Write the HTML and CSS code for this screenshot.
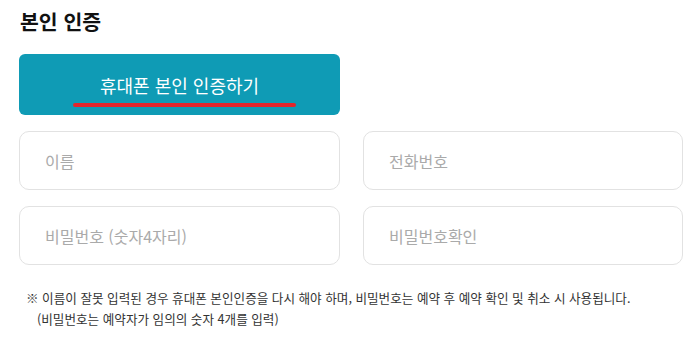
FILE: index.html
```html
<!DOCTYPE html>
<html lang="ko">
<head>
  <meta charset="UTF-8">
  <title>본인 인증</title>
  <link rel="stylesheet" href="styles.css">
</head>
<body>
  <div class="auth-section">
    <h2 class="auth-title">본인 인증</h2>
    <div class="auth-grid">
      <button type="button" class="btn-phone"><span class="btn-label">휴대폰 본인 인증하기</span></button>
      <div></div>
      <input type="text" class="field" placeholder="이름">
      <input type="text" class="field" placeholder="전화번호">
      <input type="password" class="field" placeholder="비밀번호 (숫자4자리)">
      <input type="password" class="field" placeholder="비밀번호확인">
    </div>
    <p class="auth-note">※ 이름이 잘못 입력된 경우 휴대폰 본인인증을 다시 해야 하며, 비밀번호는 예약 후 예약 확인 및 취소 시 사용됩니다.<br>
      <span class="note-sub">(비밀번호는 예약자가 임의의 숫자 4개를 입력)</span></p>
  </div>
</body>
</html>
```

FILE: styles.css
```css
body { background: #fff; font-family: "Noto Sans CJK KR", "Noto Sans", sans-serif; margin: 0; }
.auth-section {
  width: 664px;
  padding: 6px 0 0 19px;
}
.auth-title {
  margin: 0 0 18px 1px;
  font-size: 20.5px;
  font-weight: 700;
  color: #111;
  line-height: 30px;
}
.auth-grid {
  display: grid;
  grid-template-columns: 321px 320px;
  column-gap: 23px;
  row-gap: 16px;
}
.btn-phone {
  height: 61px;
  border: none;
  border-radius: 6px;
  background: #0f9bb5;
  color: #fff;
  font-family: inherit;
  font-size: 18px;
  cursor: pointer;
  display: flex;
  align-items: center;
  justify-content: center;
  padding: 0;
}
.btn-label {
  position: relative;
  line-height: 24px;
}
.btn-label::after {
  content: "";
  position: absolute;
  left: -27px;
  right: -37px;
  bottom: -10px;
  height: 4px;
  border-radius: 2px;
  background: #e3262b;
}
.field {
  box-sizing: border-box;
  height: 59px;
  border: 1px solid #e2e2e2;
  border-radius: 10px;
  padding: 0 25px;
  font-family: inherit;
  font-size: 16px;
  color: #333;
  outline: none;
}
.field::placeholder { color: #aaa; }
.auth-note {
  margin: 22px 0 0 7px;
  font-size: 12.6px;
  line-height: 21px;
  color: #333;
}
.note-sub { padding-left: 11px; }
```
